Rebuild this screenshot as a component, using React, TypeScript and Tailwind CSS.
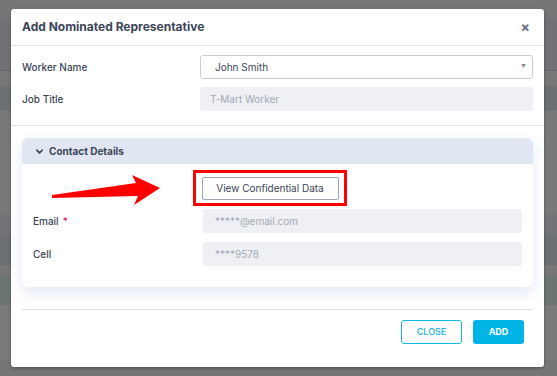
import { ChevronDown } from "lucide-react";

const font = { fontFamily: "Inter, 'Liberation Sans', sans-serif" };

const Field = ({
  label,
  value,
  required,
  muted,
}: {
  label: string;
  value: string;
  required?: boolean;
  muted?: boolean;
}) => (
  <div className="flex h-6 items-center">
    <div className="w-[170px] text-[10px] font-medium text-[#3b4658]">
      {label}
      {required && <span className="ml-1 text-[#e0264a]">*</span>}
    </div>
    <div
      className={`flex h-6 flex-1 items-center rounded-[3px] px-3 text-[10px] ${
        muted ? "bg-[#eef0f4] text-[#a3a9b4]" : "text-[#3b4658]"
      }`}
    >
      {value}
    </div>
  </div>
);

const Arrow = () => (
  <svg width="120" height="40" viewBox="0 0 120 40" className="absolute left-[48px] top-[168px]">
    <polygon
      points="4,27 88,15 84,7 112,20 86,37 90,28 4,30"
      fill="#ff0000"
    />
  </svg>
);

const App = () => {
  return (
    <div className="relative h-[376px] w-[557px] overflow-hidden bg-[#787878]" style={font}>
      <div className="flex h-full flex-col">
        <div className="h-[17px] bg-[#767676]" />
        <div className="h-[53px] bg-[#717275]" />
        <div className="h-[1px] bg-[#666]" />
        <div className="h-[15px] bg-[#777]" />
        <div className="h-[25px] bg-[#6c6f73]" />
        <div className="h-[104px] bg-[#787878]" />
        <div className="h-[20px] bg-[#727478]" />
        <div className="h-[30px] bg-[#6c6f73]" />
        <div className="h-[10px] bg-[#777]" />
        <div className="h-[30px] bg-[#6d7474]" />
        <div className="h-[55px] bg-[#7a7a7a]" />
        <div className="flex-1 bg-[#757575]" />
      </div>

      <div className="absolute left-[11px] top-[9px] flex h-[358px] w-[533px] flex-col rounded-[3px] bg-white shadow-[0_1px_3px_rgba(0,0,0,0.35)]">
        <div className="flex h-[37px] items-center justify-between border-b border-[#e1e4e8] px-[11px]">
          <div className="text-[12px] font-bold text-[#3b4658]">Add Nominated Representative</div>
          <div className="pr-[3px] text-[14px] font-bold leading-none text-[#6b7280]">×</div>
        </div>

        <div className="flex flex-col gap-2 px-[11px] pt-[9px] pb-[14px]">
          <div className="flex h-6 items-center">
            <div className="w-[178px] text-[10px] font-medium text-[#3b4658]">Worker Name</div>
            <div className="flex h-6 flex-1 items-center justify-between rounded-[3px] border border-[#c9ced6] pl-[14px] pr-[6px] text-[10px] text-[#3b4658]">
              John Smith
              <span className="text-[5px] text-[#8a909a]">▼</span>
            </div>
          </div>
          <div className="flex h-6 items-center">
            <div className="w-[178px] text-[10px] font-medium text-[#3b4658]">Job Title</div>
            <div className="flex h-6 flex-1 items-center rounded-[3px] bg-[#eef0f4] pl-[10px] text-[10px] text-[#a3a9b4]">
              T-Mart Worker
            </div>
          </div>
        </div>

        <div className="border-t border-[#e1e4e8] px-[11px] pt-3">
          <div className="rounded-[6px] bg-white shadow-[0_6px_14px_rgba(180,190,225,0.35)]">
            <div className="flex h-[26px] items-center gap-1 rounded-t-[6px] bg-[#e1e7f2] px-[12px] pt-[1px] text-[10px] font-bold text-[#3b4658]">
              <ChevronDown size={11} strokeWidth={3.5} />
              Contact Details
            </div>
            <div className="flex flex-col gap-[9px] px-[11px] pt-[6px] pb-[21px]">
              <div className="ml-[160px] flex h-[36px] w-[154px] items-center justify-center border-[3px] border-[#ff0000]">
                <div className="flex h-[23px] w-[137px] items-center justify-center rounded-[2px] border border-[#9aa5b8] text-[10px] text-[#3b4658]">
                  View Confidential Data
                </div>
              </div>
              <div className="-mt-[6px] flex flex-col gap-[9px]">
                <Field label="Email" value="*****@email.com" required muted />
                <Field label="Cell" value="****9578" muted />
              </div>
            </div>
          </div>
        </div>

        <div className="mx-[11px] mt-[22px] flex justify-end gap-[11px] border-t border-[#dcdfe3] pt-[10px] pr-[9px]">
          <div className="flex h-6 w-[61px] items-center justify-center rounded-[3px] border border-[#13b5e6] text-[9px] font-medium text-[#13b5e6]">
            CLOSE
          </div>
          <div className="flex h-6 w-[51px] items-center justify-center rounded-[3px] bg-[#00b5e6] text-[9px] font-bold text-white">
            ADD
          </div>
        </div>
      </div>

      <Arrow />
    </div>
  );
};

export default App;
